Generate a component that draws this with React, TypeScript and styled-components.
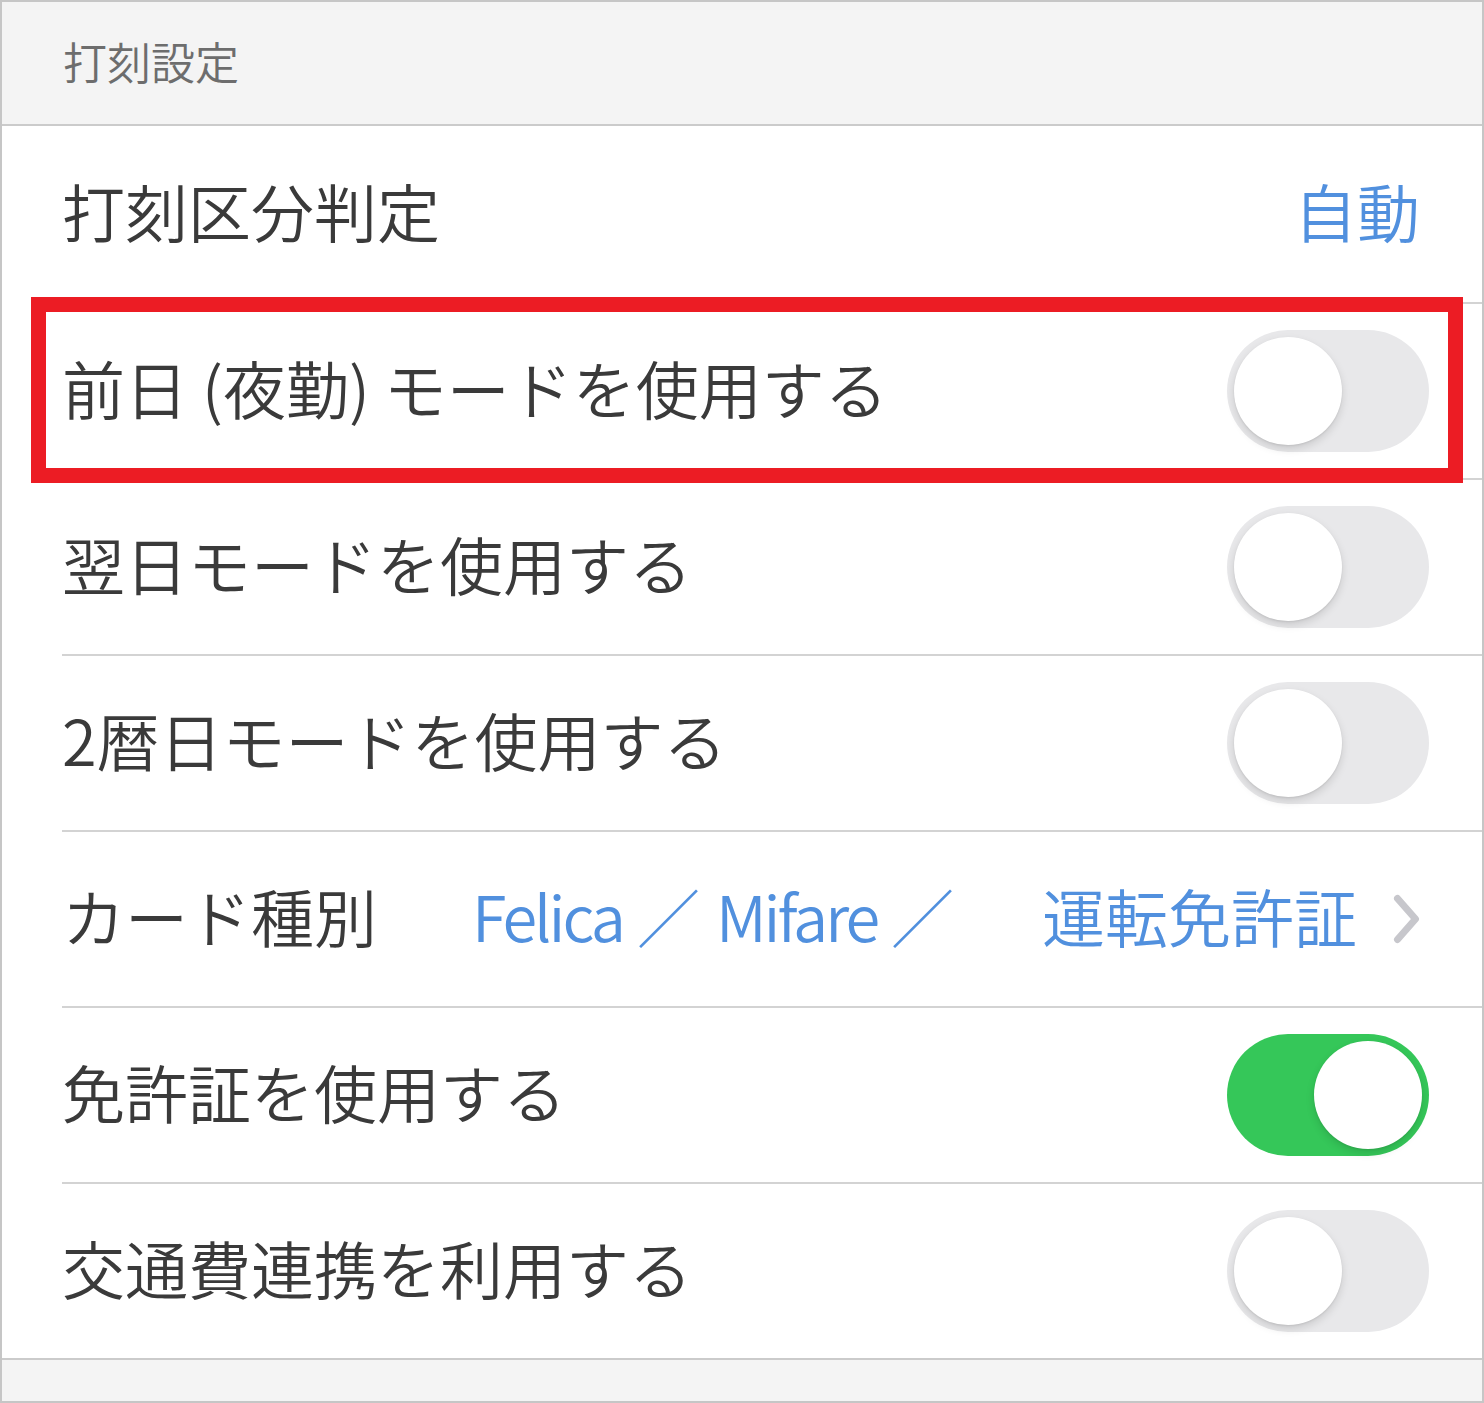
import React from "react";
import styled, { createGlobalStyle } from "styled-components";

const GlobalStyle = createGlobalStyle`
  html, body {
    margin: 0;
    padding: 0;
    background: #ffffff;
  }
  body {
    font-family: "Noto Sans CJK JP", "Noto Sans", sans-serif;
  }
`;

const Frame = styled.div`
  width: 1484px;
  height: 1403px;
  box-sizing: border-box;
  border: 2px solid #c6c6c6;
  background: #f4f4f4;
  display: flex;
  flex-direction: column;
`;

const SectionHeader = styled.div`
  height: 124px;
  box-sizing: border-box;
  border-bottom: 2px solid #cbcbcb;
  display: flex;
  align-items: center;
  padding: 0 0 4px 61px;
  font-size: 44px;
  font-weight: 350;
  line-height: 1;
  color: #6d6d6d;
`;

const List = styled.div`
  background: #ffffff;
  border-bottom: 2px solid #cbcbcb;
`;

const Row = styled.div`
  position: relative;
  padding-left: 60px;
`;

const Cell = styled.div<{ $divided: boolean }>`
  height: 176px;
  box-sizing: border-box;
  border-top: ${(p) => (p.$divided ? "2px solid #d3d3d3" : "none")};
  padding-right: 53px;
  display: flex;
  align-items: center;
  justify-content: space-between;
`;

const Label = styled.span`
  padding-bottom: 10px;
  font-size: 63px;
  font-weight: 350;
  line-height: 1;
  color: #3a3a3a;
  white-space: nowrap;
`;

const Value = styled.span`
  display: flex;
  align-items: center;
  margin-right: 9px;
  font-size: 63px;
  font-weight: 350;
  line-height: 1;
  color: #5190de;
  white-space: nowrap;
`;

const Part = styled.span<{ $latin?: boolean; $space?: number }>`
  padding-bottom: 10px;
  margin-left: ${(p) => p.$space ?? 0}px;
  letter-spacing: ${(p) => (p.$latin ? "-3px" : "0")};
`;

const Chevron = styled.svg`
  width: 27px;
  height: 50px;
  margin-left: 36px;
  flex: none;
`;

const Track = styled.div<{ $on: boolean }>`
  position: relative;
  width: 202px;
  height: 122px;
  border-radius: 61px;
  background: ${(p) => (p.$on ? "#35c759" : "#e8e8ea")};
  flex: none;
`;

const Knob = styled.div<{ $on: boolean }>`
  position: absolute;
  top: 7px;
  left: ${(p) => (p.$on ? "87px" : "7px")};
  width: 108px;
  height: 108px;
  border-radius: 50%;
  background: #ffffff;
  box-shadow: 0 4px 8px rgba(0, 0, 0, 0.13), 0 1px 2px rgba(0, 0, 0, 0.08);
`;

const Highlight = styled.div`
  position: absolute;
  top: -5px;
  left: 29px;
  width: 1432px;
  height: 186px;
  box-sizing: border-box;
  border: 15px solid #ec1c24;
  pointer-events: none;
  z-index: 1;
`;

const Footer = styled.div`
  flex: 1;
`;

const Toggle: React.FC<{ on: boolean }> = ({ on }) => (
  <Track $on={on}>
    <Knob $on={on} />
  </Track>
);

type ValuePart = { text: string; latin?: boolean; space?: number };

type Item =
  | { label: string; kind: "value"; parts: ValuePart[]; chevron?: boolean; highlight?: boolean }
  | { label: string; kind: "toggle"; on: boolean; highlight?: boolean };

const items: Item[] = [
  { label: "打刻区分判定", kind: "value", parts: [{ text: "自動" }] },
  { label: "前日 (夜勤) モードを使用する", kind: "toggle", on: false, highlight: true },
  { label: "翌日モードを使用する", kind: "toggle", on: false },
  { label: "2暦日モードを使用する", kind: "toggle", on: false },
  {
    label: "カード種別",
    kind: "value",
    chevron: true,
    parts: [
      { text: "Felica", latin: true },
      { text: "／", space: 14 },
      { text: "Mifare", latin: true, space: 16 },
      { text: "／", space: 14 },
      { text: "運転免許証", space: 88 },
    ],
  },
  { label: "免許証を使用する", kind: "toggle", on: true },
  { label: "交通費連携を利用する", kind: "toggle", on: false },
];

export default function App() {
  return (
    <>
      <GlobalStyle />
      <Frame>
        <SectionHeader>打刻設定</SectionHeader>
        <List>
          {items.map((item, i) => (
            <Row key={item.label}>
              {item.highlight && <Highlight />}
              <Cell $divided={i > 0}>
                <Label>{item.label}</Label>
                {item.kind === "toggle" ? (
                  <Toggle on={item.on} />
                ) : (
                  <Value>
                    {item.parts.map((part, j) => (
                      <Part key={j} $latin={part.latin} $space={part.space}>
                        {part.text}
                      </Part>
                    ))}
                    {item.chevron && (
                      <Chevron viewBox="0 0 27 50">
                        <path
                          d="M4.5 4.5 L22.5 25 L4.5 45.5"
                          fill="none"
                          stroke="#c7c7cc"
                          strokeWidth="7"
                          strokeLinecap="round"
                          strokeLinejoin="round"
                        />
                      </Chevron>
                    )}
                  </Value>
                )}
              </Cell>
            </Row>
          ))}
        </List>
        <Footer />
      </Frame>
    </>
  );
}
